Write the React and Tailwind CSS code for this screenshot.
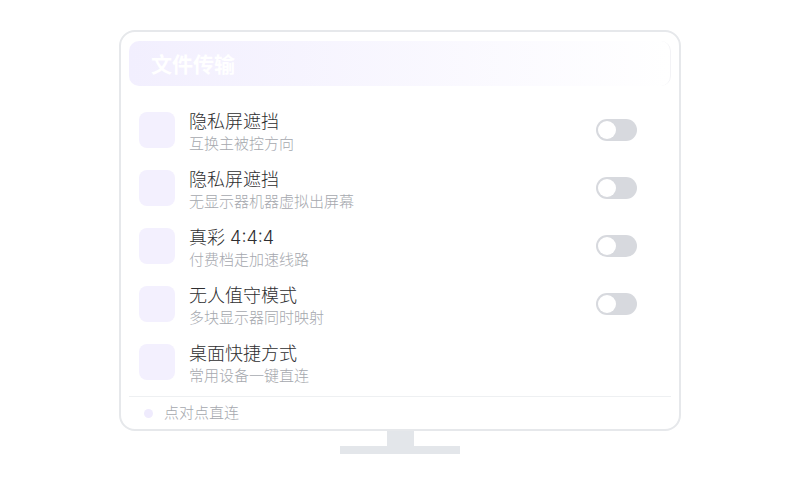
import React from 'react';

const rows = [
  { title: '隐私屏遮挡', desc: '互换主被控方向', toggle: true },
  { title: '隐私屏遮挡', desc: '无显示器机器虚拟出屏幕', toggle: true },
  { title: '真彩 4:4:4', desc: '付费档走加速线路', toggle: true },
  { title: '无人值守模式', desc: '多块显示器同时映射', toggle: true },
  { title: '桌面快捷方式', desc: '常用设备一键直连', toggle: false },
];

const Toggle = () => (
  <div className="mt-[7px] w-[41px] h-[22px] rounded-full bg-[#d7d9de] p-[2px] flex items-center">
    <div className="w-[18px] h-[18px] rounded-full bg-white" />
  </div>
);

const App = () => {
  return (
    <div
      className="w-[800px] h-[500px] bg-white flex flex-col items-center pt-[30px]"
      style={{ fontFamily: '"Inter", "Noto Sans CJK SC", sans-serif' }}
    >
      {/* Monitor */}
      <div className="w-[562px] h-[401px] rounded-[16px] border-2 border-[#e6e8eb] bg-white flex flex-col px-[8px] pt-[9px]">
        <div className="h-[45px] rounded-[10px] bg-gradient-to-r from-[#f2effe] to-white flex items-center pl-[22px] border-r border-[#f3f3f6]">
          <span className="text-white text-[21px] font-bold leading-none mt-[2px]">文件传输</span>
        </div>

        <div className="mt-[26px] flex flex-col gap-[22px]">
          {rows.map((row, i) => (
            <div key={i} className="h-[36px] flex items-start pl-[10px] pr-[34px]">
              <div className="w-[36px] h-[36px] rounded-[8px] bg-[#f3f0fe] shrink-0" />
              <div className="ml-[14px] flex-1 -mt-[1px]">
                <div className="text-[18px] leading-[22px] text-[#2e2e30] font-light">{row.title}</div>
                <div className="mt-[2px] text-[15px] leading-[18px] text-[#a5a8ae] font-light">{row.desc}</div>
              </div>
              {row.toggle && <Toggle />}
            </div>
          ))}
        </div>

        <div className="mt-[16px] h-px bg-[#eef0f2]" />
        <div className="flex items-center flex-1 pl-[15px]">
          <div className="w-[9px] h-[9px] rounded-full bg-[#efebfd]" />
          <span className="ml-[11px] text-[15px] text-[#a5a8ae] font-light">点对点直连</span>
        </div>
      </div>

      {/* Stand */}
      <div className="w-[27px] h-[15px] bg-[#e3e6ea]" />
      <div className="w-[120px] h-[8px] bg-[#e3e6ea]" />
    </div>
  );
};

export default App;
